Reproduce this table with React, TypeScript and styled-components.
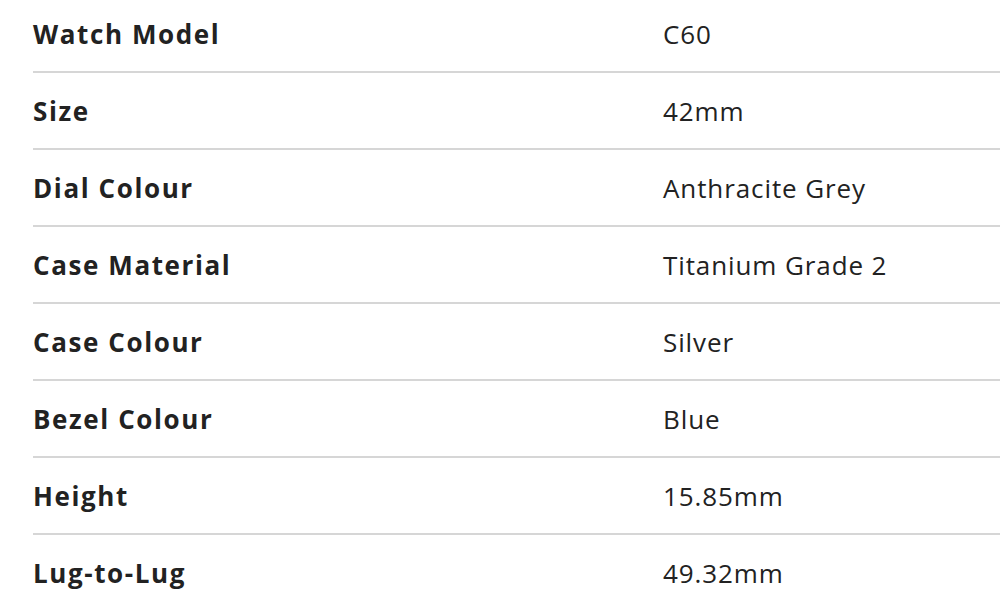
import React from 'react';
import styled, {createGlobalStyle} from 'styled-components';

const GlobalStyle = createGlobalStyle`
    html, body {
        margin: 0;
        padding: 0;
        background: #fff;
        overflow: hidden;
    }
`;

const SpecTable = styled.dl`
    margin: -4px 0 0 33px;
    padding: 0;
    font-family: "Open Sans", "Liberation Sans", sans-serif;
    color: #222;
`;

const SpecRow = styled.div`
    display: grid;
    grid-template-columns: 630px 1fr;
    align-items: center;
    height: 75px;
    border-bottom: 2px solid #d6d6d6;

    &:last-child {
        border-bottom: none;
    }
`;

const Label = styled.dt`
    margin: 0;
    font-size: 26px;
    font-weight: 700;
    letter-spacing: 1.6px;
`;

const Value = styled.dd`
    margin: 0;
    font-size: 26px;
    font-weight: 400;
    letter-spacing: 0.9px;
`;

const specs: Array<[string, string]> = [
    ['Watch Model', 'C60'],
    ['Size', '42mm'],
    ['Dial Colour', 'Anthracite Grey'],
    ['Case Material', 'Titanium Grade 2'],
    ['Case Colour', 'Silver'],
    ['Bezel Colour', 'Blue'],
    ['Height', '15.85mm'],
    ['Lug-to-Lug', '49.32mm'],
];

const App = () => {
    return (
        <>
            <GlobalStyle/>
            <SpecTable>
                {specs.map(([label, value]) => (
                    <SpecRow key={label}>
                        <Label>{label}</Label>
                        <Value>{value}</Value>
                    </SpecRow>
                ))}
            </SpecTable>
        </>
    );
};

export default App;
